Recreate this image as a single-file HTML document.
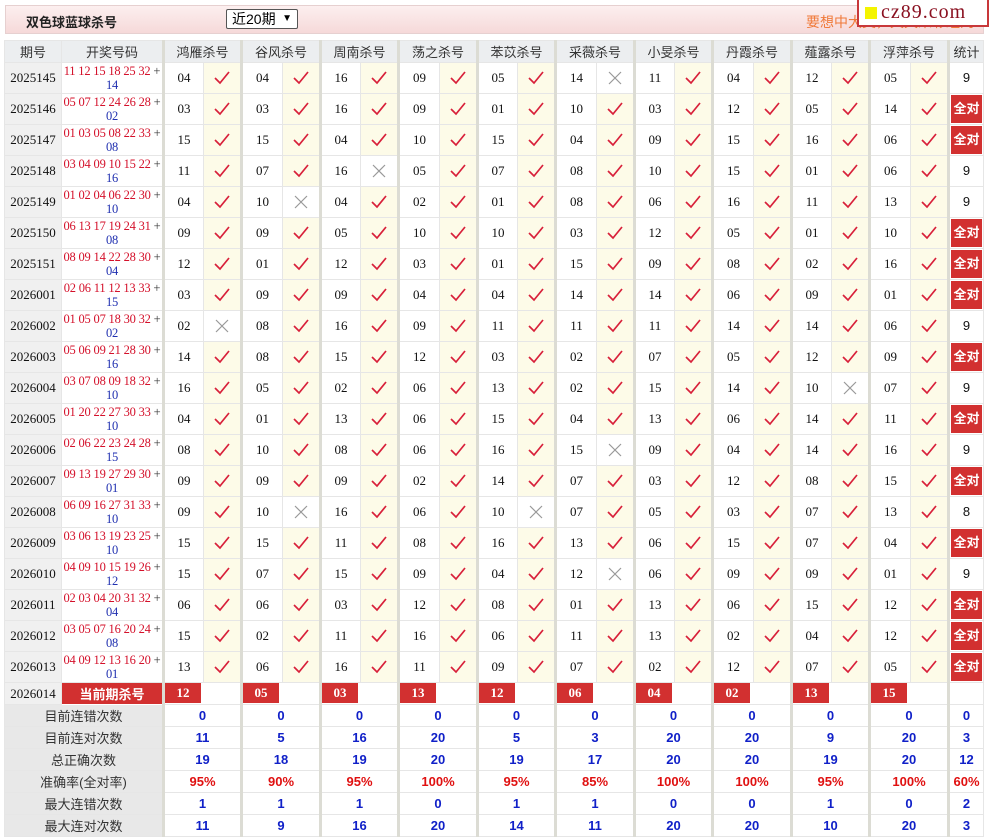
<!DOCTYPE html>
<html><head><meta charset="utf-8">
<style>
*{box-sizing:border-box}
body{margin:0;width:989px;height:838px;background:#fff;font-family:"Liberation Sans","Noto Sans CJK SC",sans-serif;position:relative;overflow:hidden}
.top{position:absolute;left:5px;top:5px;width:979px;height:29px;background:linear-gradient(#fcefef,#f6d9d9);border:1px solid #e6d0d0}
.title{position:absolute;left:20px;top:6px;font-size:13px;font-weight:bold;color:#222}
.sel{position:absolute;left:220px;top:3px;width:72px;height:20px;border:1px solid #555;border-radius:2px;background:#fff;font-size:14px;padding-left:5px;line-height:18px;color:#000}
.sel span{position:absolute;right:5px;top:0;font-size:10px}
.slogan{position:absolute;left:800px;top:6px;font-size:14px;color:#f07a3a}
.logo{position:absolute;left:857px;top:0;width:132px;height:27px;background:#fff;border:2px solid #c8383a;border-top:none}
.logo i{position:absolute;left:6px;top:7px;width:12px;height:12px;background:#f4f400}
.logo b{position:absolute;left:22px;top:1px;font-family:"Liberation Serif",serif;font-weight:normal;font-size:20px;color:#8a1020;letter-spacing:1px}
table{position:absolute;left:4px;top:40px;border-collapse:collapse;table-layout:fixed}
td{border:1px solid #e6e6e6;padding:0;text-align:center;font-family:"Liberation Serif",serif;font-size:13px;color:#111;overflow:hidden;white-space:nowrap}
tr.h td{height:22px;background:#eceef0;font-family:"Liberation Sans","Noto Sans CJK SC",sans-serif;font-size:13px;color:#333}
tr.r td{height:31px;line-height:14px}
td.g{border-left:3px solid #dcdcd4}
td.q{background:#f0f0f0}
td.k{background:#fdfbe8}
td.x{background:#fff}
td.c{color:#d4102a;font-size:12.5px;line-height:14px;letter-spacing:-0.2px}
td.c em{font-style:normal;color:#2030b0}
td.c u{text-decoration:none;color:#333}
td.s{font-family:"Liberation Sans",sans-serif}
td.all{padding:1px}
td.all div{background:#d23030;color:#fff;font-weight:bold;font-family:"Liberation Sans","Noto Sans CJK SC",sans-serif;font-size:13px;height:28px;line-height:28px}
tr.cur td{height:22px}
td.cur{background:#d23030;color:#fff;font-weight:bold;font-family:"Liberation Sans","Noto Sans CJK SC",sans-serif;font-size:13px;border:1px solid #fff}
td.kn{padding:0 1px 1px 0}
td.kn div{background:#d23030;color:#fff;font-weight:bold;height:20px;line-height:20px;width:36px}
tr.st td{height:22px;font-family:"Liberation Sans",sans-serif;font-weight:bold;font-size:13px;color:#1020c8}
tr.st td.l{background:#e8e8e8;color:#333;font-weight:normal;font-family:"Liberation Sans","Noto Sans CJK SC",sans-serif}
tr.st td.red{color:#e01010}
svg{display:block;margin:auto}
</style></head><body>
<svg width="0" height="0" style="position:absolute"><defs>
<symbol id="ok" viewBox="0 0 20 20"><path d="M3 10 L8 15 L17 4" fill="none" stroke="#d8203a" stroke-width="1.7"/></symbol>
<symbol id="no" viewBox="0 0 20 20"><path d="M4 4 L16 16 M16 4 L4 16" fill="none" stroke="#999" stroke-width="1.2"/></symbol>
</defs></svg>
<div class="top"><div class="title">双色球蓝球杀号</div><div class="sel">近20期<span>&#9660;</span></div><div class="slogan">要想中大奖，天天来彩经网</div></div>
<div class="logo"><i></i><b>cz89.com</b></div>
<table>
<colgroup><col style="width:57px"><col style="width:102px">
<col style="width:40px"><col style="width:38px"><col style="width:41px"><col style="width:38px"><col style="width:40px"><col style="width:38px"><col style="width:41px"><col style="width:38px"><col style="width:40px"><col style="width:38px"><col style="width:41px"><col style="width:38px"><col style="width:40px"><col style="width:38px"><col style="width:41px"><col style="width:38px"><col style="width:40px"><col style="width:38px"><col style="width:41px"><col style="width:38px">
<col style="width:35px"></colgroup>
<tr class="h"><td>期号</td><td>开奖号码</td><td class="g" colspan="2">鸿雁杀号</td><td class="g" colspan="2">谷风杀号</td><td class="g" colspan="2">周南杀号</td><td class="g" colspan="2">荡之杀号</td><td class="g" colspan="2">苯苡杀号</td><td class="g" colspan="2">采薇杀号</td><td class="g" colspan="2">小旻杀号</td><td class="g" colspan="2">丹霞杀号</td><td class="g" colspan="2">薤露杀号</td><td class="g" colspan="2">浮萍杀号</td><td class="g">统计</td></tr>
<tr class="r"><td class="q">2025145</td><td class="c">11 12 15 18 25 32 <u>+</u><br><em>14</em></td><td class="g">04</td><td class="k"><svg width="20" height="20"><use href="#ok"/></svg></td><td class="g">04</td><td class="k"><svg width="20" height="20"><use href="#ok"/></svg></td><td class="g">16</td><td class="k"><svg width="20" height="20"><use href="#ok"/></svg></td><td class="g">09</td><td class="k"><svg width="20" height="20"><use href="#ok"/></svg></td><td class="g">05</td><td class="k"><svg width="20" height="20"><use href="#ok"/></svg></td><td class="g">14</td><td class="x"><svg width="20" height="20"><use href="#no"/></svg></td><td class="g">11</td><td class="k"><svg width="20" height="20"><use href="#ok"/></svg></td><td class="g">04</td><td class="k"><svg width="20" height="20"><use href="#ok"/></svg></td><td class="g">12</td><td class="k"><svg width="20" height="20"><use href="#ok"/></svg></td><td class="g">05</td><td class="k"><svg width="20" height="20"><use href="#ok"/></svg></td><td class="g s">9</td></tr>
<tr class="r"><td class="q">2025146</td><td class="c">05 07 12 24 26 28 <u>+</u><br><em>02</em></td><td class="g">03</td><td class="k"><svg width="20" height="20"><use href="#ok"/></svg></td><td class="g">03</td><td class="k"><svg width="20" height="20"><use href="#ok"/></svg></td><td class="g">16</td><td class="k"><svg width="20" height="20"><use href="#ok"/></svg></td><td class="g">09</td><td class="k"><svg width="20" height="20"><use href="#ok"/></svg></td><td class="g">01</td><td class="k"><svg width="20" height="20"><use href="#ok"/></svg></td><td class="g">10</td><td class="k"><svg width="20" height="20"><use href="#ok"/></svg></td><td class="g">03</td><td class="k"><svg width="20" height="20"><use href="#ok"/></svg></td><td class="g">12</td><td class="k"><svg width="20" height="20"><use href="#ok"/></svg></td><td class="g">05</td><td class="k"><svg width="20" height="20"><use href="#ok"/></svg></td><td class="g">14</td><td class="k"><svg width="20" height="20"><use href="#ok"/></svg></td><td class="g all"><div>全对</div></td></tr>
<tr class="r"><td class="q">2025147</td><td class="c">01 03 05 08 22 33 <u>+</u><br><em>08</em></td><td class="g">15</td><td class="k"><svg width="20" height="20"><use href="#ok"/></svg></td><td class="g">15</td><td class="k"><svg width="20" height="20"><use href="#ok"/></svg></td><td class="g">04</td><td class="k"><svg width="20" height="20"><use href="#ok"/></svg></td><td class="g">10</td><td class="k"><svg width="20" height="20"><use href="#ok"/></svg></td><td class="g">15</td><td class="k"><svg width="20" height="20"><use href="#ok"/></svg></td><td class="g">04</td><td class="k"><svg width="20" height="20"><use href="#ok"/></svg></td><td class="g">09</td><td class="k"><svg width="20" height="20"><use href="#ok"/></svg></td><td class="g">15</td><td class="k"><svg width="20" height="20"><use href="#ok"/></svg></td><td class="g">16</td><td class="k"><svg width="20" height="20"><use href="#ok"/></svg></td><td class="g">06</td><td class="k"><svg width="20" height="20"><use href="#ok"/></svg></td><td class="g all"><div>全对</div></td></tr>
<tr class="r"><td class="q">2025148</td><td class="c">03 04 09 10 15 22 <u>+</u><br><em>16</em></td><td class="g">11</td><td class="k"><svg width="20" height="20"><use href="#ok"/></svg></td><td class="g">07</td><td class="k"><svg width="20" height="20"><use href="#ok"/></svg></td><td class="g">16</td><td class="x"><svg width="20" height="20"><use href="#no"/></svg></td><td class="g">05</td><td class="k"><svg width="20" height="20"><use href="#ok"/></svg></td><td class="g">07</td><td class="k"><svg width="20" height="20"><use href="#ok"/></svg></td><td class="g">08</td><td class="k"><svg width="20" height="20"><use href="#ok"/></svg></td><td class="g">10</td><td class="k"><svg width="20" height="20"><use href="#ok"/></svg></td><td class="g">15</td><td class="k"><svg width="20" height="20"><use href="#ok"/></svg></td><td class="g">01</td><td class="k"><svg width="20" height="20"><use href="#ok"/></svg></td><td class="g">06</td><td class="k"><svg width="20" height="20"><use href="#ok"/></svg></td><td class="g s">9</td></tr>
<tr class="r"><td class="q">2025149</td><td class="c">01 02 04 06 22 30 <u>+</u><br><em>10</em></td><td class="g">04</td><td class="k"><svg width="20" height="20"><use href="#ok"/></svg></td><td class="g">10</td><td class="x"><svg width="20" height="20"><use href="#no"/></svg></td><td class="g">04</td><td class="k"><svg width="20" height="20"><use href="#ok"/></svg></td><td class="g">02</td><td class="k"><svg width="20" height="20"><use href="#ok"/></svg></td><td class="g">01</td><td class="k"><svg width="20" height="20"><use href="#ok"/></svg></td><td class="g">08</td><td class="k"><svg width="20" height="20"><use href="#ok"/></svg></td><td class="g">06</td><td class="k"><svg width="20" height="20"><use href="#ok"/></svg></td><td class="g">16</td><td class="k"><svg width="20" height="20"><use href="#ok"/></svg></td><td class="g">11</td><td class="k"><svg width="20" height="20"><use href="#ok"/></svg></td><td class="g">13</td><td class="k"><svg width="20" height="20"><use href="#ok"/></svg></td><td class="g s">9</td></tr>
<tr class="r"><td class="q">2025150</td><td class="c">06 13 17 19 24 31 <u>+</u><br><em>08</em></td><td class="g">09</td><td class="k"><svg width="20" height="20"><use href="#ok"/></svg></td><td class="g">09</td><td class="k"><svg width="20" height="20"><use href="#ok"/></svg></td><td class="g">05</td><td class="k"><svg width="20" height="20"><use href="#ok"/></svg></td><td class="g">10</td><td class="k"><svg width="20" height="20"><use href="#ok"/></svg></td><td class="g">10</td><td class="k"><svg width="20" height="20"><use href="#ok"/></svg></td><td class="g">03</td><td class="k"><svg width="20" height="20"><use href="#ok"/></svg></td><td class="g">12</td><td class="k"><svg width="20" height="20"><use href="#ok"/></svg></td><td class="g">05</td><td class="k"><svg width="20" height="20"><use href="#ok"/></svg></td><td class="g">01</td><td class="k"><svg width="20" height="20"><use href="#ok"/></svg></td><td class="g">10</td><td class="k"><svg width="20" height="20"><use href="#ok"/></svg></td><td class="g all"><div>全对</div></td></tr>
<tr class="r"><td class="q">2025151</td><td class="c">08 09 14 22 28 30 <u>+</u><br><em>04</em></td><td class="g">12</td><td class="k"><svg width="20" height="20"><use href="#ok"/></svg></td><td class="g">01</td><td class="k"><svg width="20" height="20"><use href="#ok"/></svg></td><td class="g">12</td><td class="k"><svg width="20" height="20"><use href="#ok"/></svg></td><td class="g">03</td><td class="k"><svg width="20" height="20"><use href="#ok"/></svg></td><td class="g">01</td><td class="k"><svg width="20" height="20"><use href="#ok"/></svg></td><td class="g">15</td><td class="k"><svg width="20" height="20"><use href="#ok"/></svg></td><td class="g">09</td><td class="k"><svg width="20" height="20"><use href="#ok"/></svg></td><td class="g">08</td><td class="k"><svg width="20" height="20"><use href="#ok"/></svg></td><td class="g">02</td><td class="k"><svg width="20" height="20"><use href="#ok"/></svg></td><td class="g">16</td><td class="k"><svg width="20" height="20"><use href="#ok"/></svg></td><td class="g all"><div>全对</div></td></tr>
<tr class="r"><td class="q">2026001</td><td class="c">02 06 11 12 13 33 <u>+</u><br><em>15</em></td><td class="g">03</td><td class="k"><svg width="20" height="20"><use href="#ok"/></svg></td><td class="g">09</td><td class="k"><svg width="20" height="20"><use href="#ok"/></svg></td><td class="g">09</td><td class="k"><svg width="20" height="20"><use href="#ok"/></svg></td><td class="g">04</td><td class="k"><svg width="20" height="20"><use href="#ok"/></svg></td><td class="g">04</td><td class="k"><svg width="20" height="20"><use href="#ok"/></svg></td><td class="g">14</td><td class="k"><svg width="20" height="20"><use href="#ok"/></svg></td><td class="g">14</td><td class="k"><svg width="20" height="20"><use href="#ok"/></svg></td><td class="g">06</td><td class="k"><svg width="20" height="20"><use href="#ok"/></svg></td><td class="g">09</td><td class="k"><svg width="20" height="20"><use href="#ok"/></svg></td><td class="g">01</td><td class="k"><svg width="20" height="20"><use href="#ok"/></svg></td><td class="g all"><div>全对</div></td></tr>
<tr class="r"><td class="q">2026002</td><td class="c">01 05 07 18 30 32 <u>+</u><br><em>02</em></td><td class="g">02</td><td class="x"><svg width="20" height="20"><use href="#no"/></svg></td><td class="g">08</td><td class="k"><svg width="20" height="20"><use href="#ok"/></svg></td><td class="g">16</td><td class="k"><svg width="20" height="20"><use href="#ok"/></svg></td><td class="g">09</td><td class="k"><svg width="20" height="20"><use href="#ok"/></svg></td><td class="g">11</td><td class="k"><svg width="20" height="20"><use href="#ok"/></svg></td><td class="g">11</td><td class="k"><svg width="20" height="20"><use href="#ok"/></svg></td><td class="g">11</td><td class="k"><svg width="20" height="20"><use href="#ok"/></svg></td><td class="g">14</td><td class="k"><svg width="20" height="20"><use href="#ok"/></svg></td><td class="g">14</td><td class="k"><svg width="20" height="20"><use href="#ok"/></svg></td><td class="g">06</td><td class="k"><svg width="20" height="20"><use href="#ok"/></svg></td><td class="g s">9</td></tr>
<tr class="r"><td class="q">2026003</td><td class="c">05 06 09 21 28 30 <u>+</u><br><em>16</em></td><td class="g">14</td><td class="k"><svg width="20" height="20"><use href="#ok"/></svg></td><td class="g">08</td><td class="k"><svg width="20" height="20"><use href="#ok"/></svg></td><td class="g">15</td><td class="k"><svg width="20" height="20"><use href="#ok"/></svg></td><td class="g">12</td><td class="k"><svg width="20" height="20"><use href="#ok"/></svg></td><td class="g">03</td><td class="k"><svg width="20" height="20"><use href="#ok"/></svg></td><td class="g">02</td><td class="k"><svg width="20" height="20"><use href="#ok"/></svg></td><td class="g">07</td><td class="k"><svg width="20" height="20"><use href="#ok"/></svg></td><td class="g">05</td><td class="k"><svg width="20" height="20"><use href="#ok"/></svg></td><td class="g">12</td><td class="k"><svg width="20" height="20"><use href="#ok"/></svg></td><td class="g">09</td><td class="k"><svg width="20" height="20"><use href="#ok"/></svg></td><td class="g all"><div>全对</div></td></tr>
<tr class="r"><td class="q">2026004</td><td class="c">03 07 08 09 18 32 <u>+</u><br><em>10</em></td><td class="g">16</td><td class="k"><svg width="20" height="20"><use href="#ok"/></svg></td><td class="g">05</td><td class="k"><svg width="20" height="20"><use href="#ok"/></svg></td><td class="g">02</td><td class="k"><svg width="20" height="20"><use href="#ok"/></svg></td><td class="g">06</td><td class="k"><svg width="20" height="20"><use href="#ok"/></svg></td><td class="g">13</td><td class="k"><svg width="20" height="20"><use href="#ok"/></svg></td><td class="g">02</td><td class="k"><svg width="20" height="20"><use href="#ok"/></svg></td><td class="g">15</td><td class="k"><svg width="20" height="20"><use href="#ok"/></svg></td><td class="g">14</td><td class="k"><svg width="20" height="20"><use href="#ok"/></svg></td><td class="g">10</td><td class="x"><svg width="20" height="20"><use href="#no"/></svg></td><td class="g">07</td><td class="k"><svg width="20" height="20"><use href="#ok"/></svg></td><td class="g s">9</td></tr>
<tr class="r"><td class="q">2026005</td><td class="c">01 20 22 27 30 33 <u>+</u><br><em>10</em></td><td class="g">04</td><td class="k"><svg width="20" height="20"><use href="#ok"/></svg></td><td class="g">01</td><td class="k"><svg width="20" height="20"><use href="#ok"/></svg></td><td class="g">13</td><td class="k"><svg width="20" height="20"><use href="#ok"/></svg></td><td class="g">06</td><td class="k"><svg width="20" height="20"><use href="#ok"/></svg></td><td class="g">15</td><td class="k"><svg width="20" height="20"><use href="#ok"/></svg></td><td class="g">04</td><td class="k"><svg width="20" height="20"><use href="#ok"/></svg></td><td class="g">13</td><td class="k"><svg width="20" height="20"><use href="#ok"/></svg></td><td class="g">06</td><td class="k"><svg width="20" height="20"><use href="#ok"/></svg></td><td class="g">14</td><td class="k"><svg width="20" height="20"><use href="#ok"/></svg></td><td class="g">11</td><td class="k"><svg width="20" height="20"><use href="#ok"/></svg></td><td class="g all"><div>全对</div></td></tr>
<tr class="r"><td class="q">2026006</td><td class="c">02 06 22 23 24 28 <u>+</u><br><em>15</em></td><td class="g">08</td><td class="k"><svg width="20" height="20"><use href="#ok"/></svg></td><td class="g">10</td><td class="k"><svg width="20" height="20"><use href="#ok"/></svg></td><td class="g">08</td><td class="k"><svg width="20" height="20"><use href="#ok"/></svg></td><td class="g">06</td><td class="k"><svg width="20" height="20"><use href="#ok"/></svg></td><td class="g">16</td><td class="k"><svg width="20" height="20"><use href="#ok"/></svg></td><td class="g">15</td><td class="x"><svg width="20" height="20"><use href="#no"/></svg></td><td class="g">09</td><td class="k"><svg width="20" height="20"><use href="#ok"/></svg></td><td class="g">04</td><td class="k"><svg width="20" height="20"><use href="#ok"/></svg></td><td class="g">14</td><td class="k"><svg width="20" height="20"><use href="#ok"/></svg></td><td class="g">16</td><td class="k"><svg width="20" height="20"><use href="#ok"/></svg></td><td class="g s">9</td></tr>
<tr class="r"><td class="q">2026007</td><td class="c">09 13 19 27 29 30 <u>+</u><br><em>01</em></td><td class="g">09</td><td class="k"><svg width="20" height="20"><use href="#ok"/></svg></td><td class="g">09</td><td class="k"><svg width="20" height="20"><use href="#ok"/></svg></td><td class="g">09</td><td class="k"><svg width="20" height="20"><use href="#ok"/></svg></td><td class="g">02</td><td class="k"><svg width="20" height="20"><use href="#ok"/></svg></td><td class="g">14</td><td class="k"><svg width="20" height="20"><use href="#ok"/></svg></td><td class="g">07</td><td class="k"><svg width="20" height="20"><use href="#ok"/></svg></td><td class="g">03</td><td class="k"><svg width="20" height="20"><use href="#ok"/></svg></td><td class="g">12</td><td class="k"><svg width="20" height="20"><use href="#ok"/></svg></td><td class="g">08</td><td class="k"><svg width="20" height="20"><use href="#ok"/></svg></td><td class="g">15</td><td class="k"><svg width="20" height="20"><use href="#ok"/></svg></td><td class="g all"><div>全对</div></td></tr>
<tr class="r"><td class="q">2026008</td><td class="c">06 09 16 27 31 33 <u>+</u><br><em>10</em></td><td class="g">09</td><td class="k"><svg width="20" height="20"><use href="#ok"/></svg></td><td class="g">10</td><td class="x"><svg width="20" height="20"><use href="#no"/></svg></td><td class="g">16</td><td class="k"><svg width="20" height="20"><use href="#ok"/></svg></td><td class="g">06</td><td class="k"><svg width="20" height="20"><use href="#ok"/></svg></td><td class="g">10</td><td class="x"><svg width="20" height="20"><use href="#no"/></svg></td><td class="g">07</td><td class="k"><svg width="20" height="20"><use href="#ok"/></svg></td><td class="g">05</td><td class="k"><svg width="20" height="20"><use href="#ok"/></svg></td><td class="g">03</td><td class="k"><svg width="20" height="20"><use href="#ok"/></svg></td><td class="g">07</td><td class="k"><svg width="20" height="20"><use href="#ok"/></svg></td><td class="g">13</td><td class="k"><svg width="20" height="20"><use href="#ok"/></svg></td><td class="g s">8</td></tr>
<tr class="r"><td class="q">2026009</td><td class="c">03 06 13 19 23 25 <u>+</u><br><em>10</em></td><td class="g">15</td><td class="k"><svg width="20" height="20"><use href="#ok"/></svg></td><td class="g">15</td><td class="k"><svg width="20" height="20"><use href="#ok"/></svg></td><td class="g">11</td><td class="k"><svg width="20" height="20"><use href="#ok"/></svg></td><td class="g">08</td><td class="k"><svg width="20" height="20"><use href="#ok"/></svg></td><td class="g">16</td><td class="k"><svg width="20" height="20"><use href="#ok"/></svg></td><td class="g">13</td><td class="k"><svg width="20" height="20"><use href="#ok"/></svg></td><td class="g">06</td><td class="k"><svg width="20" height="20"><use href="#ok"/></svg></td><td class="g">15</td><td class="k"><svg width="20" height="20"><use href="#ok"/></svg></td><td class="g">07</td><td class="k"><svg width="20" height="20"><use href="#ok"/></svg></td><td class="g">04</td><td class="k"><svg width="20" height="20"><use href="#ok"/></svg></td><td class="g all"><div>全对</div></td></tr>
<tr class="r"><td class="q">2026010</td><td class="c">04 09 10 15 19 26 <u>+</u><br><em>12</em></td><td class="g">15</td><td class="k"><svg width="20" height="20"><use href="#ok"/></svg></td><td class="g">07</td><td class="k"><svg width="20" height="20"><use href="#ok"/></svg></td><td class="g">15</td><td class="k"><svg width="20" height="20"><use href="#ok"/></svg></td><td class="g">09</td><td class="k"><svg width="20" height="20"><use href="#ok"/></svg></td><td class="g">04</td><td class="k"><svg width="20" height="20"><use href="#ok"/></svg></td><td class="g">12</td><td class="x"><svg width="20" height="20"><use href="#no"/></svg></td><td class="g">06</td><td class="k"><svg width="20" height="20"><use href="#ok"/></svg></td><td class="g">09</td><td class="k"><svg width="20" height="20"><use href="#ok"/></svg></td><td class="g">09</td><td class="k"><svg width="20" height="20"><use href="#ok"/></svg></td><td class="g">01</td><td class="k"><svg width="20" height="20"><use href="#ok"/></svg></td><td class="g s">9</td></tr>
<tr class="r"><td class="q">2026011</td><td class="c">02 03 04 20 31 32 <u>+</u><br><em>04</em></td><td class="g">06</td><td class="k"><svg width="20" height="20"><use href="#ok"/></svg></td><td class="g">06</td><td class="k"><svg width="20" height="20"><use href="#ok"/></svg></td><td class="g">03</td><td class="k"><svg width="20" height="20"><use href="#ok"/></svg></td><td class="g">12</td><td class="k"><svg width="20" height="20"><use href="#ok"/></svg></td><td class="g">08</td><td class="k"><svg width="20" height="20"><use href="#ok"/></svg></td><td class="g">01</td><td class="k"><svg width="20" height="20"><use href="#ok"/></svg></td><td class="g">13</td><td class="k"><svg width="20" height="20"><use href="#ok"/></svg></td><td class="g">06</td><td class="k"><svg width="20" height="20"><use href="#ok"/></svg></td><td class="g">15</td><td class="k"><svg width="20" height="20"><use href="#ok"/></svg></td><td class="g">12</td><td class="k"><svg width="20" height="20"><use href="#ok"/></svg></td><td class="g all"><div>全对</div></td></tr>
<tr class="r"><td class="q">2026012</td><td class="c">03 05 07 16 20 24 <u>+</u><br><em>08</em></td><td class="g">15</td><td class="k"><svg width="20" height="20"><use href="#ok"/></svg></td><td class="g">02</td><td class="k"><svg width="20" height="20"><use href="#ok"/></svg></td><td class="g">11</td><td class="k"><svg width="20" height="20"><use href="#ok"/></svg></td><td class="g">16</td><td class="k"><svg width="20" height="20"><use href="#ok"/></svg></td><td class="g">06</td><td class="k"><svg width="20" height="20"><use href="#ok"/></svg></td><td class="g">11</td><td class="k"><svg width="20" height="20"><use href="#ok"/></svg></td><td class="g">13</td><td class="k"><svg width="20" height="20"><use href="#ok"/></svg></td><td class="g">02</td><td class="k"><svg width="20" height="20"><use href="#ok"/></svg></td><td class="g">04</td><td class="k"><svg width="20" height="20"><use href="#ok"/></svg></td><td class="g">12</td><td class="k"><svg width="20" height="20"><use href="#ok"/></svg></td><td class="g all"><div>全对</div></td></tr>
<tr class="r"><td class="q">2026013</td><td class="c">04 09 12 13 16 20 <u>+</u><br><em>01</em></td><td class="g">13</td><td class="k"><svg width="20" height="20"><use href="#ok"/></svg></td><td class="g">06</td><td class="k"><svg width="20" height="20"><use href="#ok"/></svg></td><td class="g">16</td><td class="k"><svg width="20" height="20"><use href="#ok"/></svg></td><td class="g">11</td><td class="k"><svg width="20" height="20"><use href="#ok"/></svg></td><td class="g">09</td><td class="k"><svg width="20" height="20"><use href="#ok"/></svg></td><td class="g">07</td><td class="k"><svg width="20" height="20"><use href="#ok"/></svg></td><td class="g">02</td><td class="k"><svg width="20" height="20"><use href="#ok"/></svg></td><td class="g">12</td><td class="k"><svg width="20" height="20"><use href="#ok"/></svg></td><td class="g">07</td><td class="k"><svg width="20" height="20"><use href="#ok"/></svg></td><td class="g">05</td><td class="k"><svg width="20" height="20"><use href="#ok"/></svg></td><td class="g all"><div>全对</div></td></tr>
<tr class="cur"><td class="q">2026014</td><td class="cur">当前期杀号</td><td class="g kn" colspan="2"><div>12</div></td><td class="g kn" colspan="2"><div>05</div></td><td class="g kn" colspan="2"><div>03</div></td><td class="g kn" colspan="2"><div>13</div></td><td class="g kn" colspan="2"><div>12</div></td><td class="g kn" colspan="2"><div>06</div></td><td class="g kn" colspan="2"><div>04</div></td><td class="g kn" colspan="2"><div>02</div></td><td class="g kn" colspan="2"><div>13</div></td><td class="g kn" colspan="2"><div>15</div></td><td class="g"></td></tr>
<tr class="st"><td class="l" colspan="2">目前连错次数</td><td class="g" colspan="2">0</td><td class="g" colspan="2">0</td><td class="g" colspan="2">0</td><td class="g" colspan="2">0</td><td class="g" colspan="2">0</td><td class="g" colspan="2">0</td><td class="g" colspan="2">0</td><td class="g" colspan="2">0</td><td class="g" colspan="2">0</td><td class="g" colspan="2">0</td><td class="g">0</td></tr>
<tr class="st"><td class="l" colspan="2">目前连对次数</td><td class="g" colspan="2">11</td><td class="g" colspan="2">5</td><td class="g" colspan="2">16</td><td class="g" colspan="2">20</td><td class="g" colspan="2">5</td><td class="g" colspan="2">3</td><td class="g" colspan="2">20</td><td class="g" colspan="2">20</td><td class="g" colspan="2">9</td><td class="g" colspan="2">20</td><td class="g">3</td></tr>
<tr class="st"><td class="l" colspan="2">总正确次数</td><td class="g" colspan="2">19</td><td class="g" colspan="2">18</td><td class="g" colspan="2">19</td><td class="g" colspan="2">20</td><td class="g" colspan="2">19</td><td class="g" colspan="2">17</td><td class="g" colspan="2">20</td><td class="g" colspan="2">20</td><td class="g" colspan="2">19</td><td class="g" colspan="2">20</td><td class="g">12</td></tr>
<tr class="st"><td class="l" colspan="2">准确率(全对率)</td><td class="g red" colspan="2">95%</td><td class="g red" colspan="2">90%</td><td class="g red" colspan="2">95%</td><td class="g red" colspan="2">100%</td><td class="g red" colspan="2">95%</td><td class="g red" colspan="2">85%</td><td class="g red" colspan="2">100%</td><td class="g red" colspan="2">100%</td><td class="g red" colspan="2">95%</td><td class="g red" colspan="2">100%</td><td class="g red">60%</td></tr>
<tr class="st"><td class="l" colspan="2">最大连错次数</td><td class="g" colspan="2">1</td><td class="g" colspan="2">1</td><td class="g" colspan="2">1</td><td class="g" colspan="2">0</td><td class="g" colspan="2">1</td><td class="g" colspan="2">1</td><td class="g" colspan="2">0</td><td class="g" colspan="2">0</td><td class="g" colspan="2">1</td><td class="g" colspan="2">0</td><td class="g">2</td></tr>
<tr class="st"><td class="l" colspan="2">最大连对次数</td><td class="g" colspan="2">11</td><td class="g" colspan="2">9</td><td class="g" colspan="2">16</td><td class="g" colspan="2">20</td><td class="g" colspan="2">14</td><td class="g" colspan="2">11</td><td class="g" colspan="2">20</td><td class="g" colspan="2">20</td><td class="g" colspan="2">10</td><td class="g" colspan="2">20</td><td class="g">3</td></tr>
</table>
</body></html>
